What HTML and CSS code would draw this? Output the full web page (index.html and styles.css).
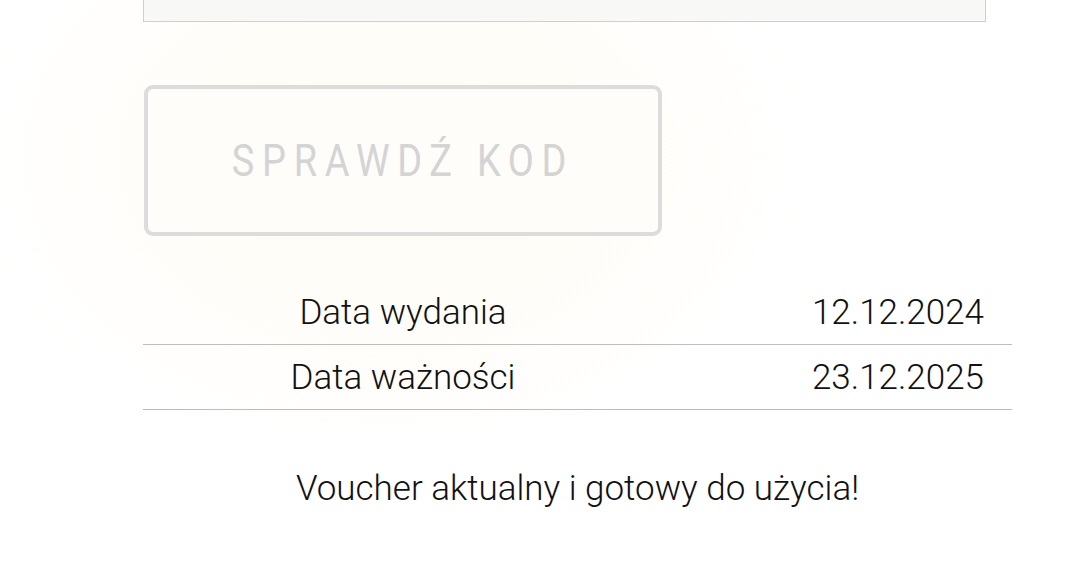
FILE: index.html
```html
<!DOCTYPE html>
<html lang="pl">
<head>
<meta charset="utf-8">
<link rel="stylesheet" href="styles.css">
</head>
<body>
<div class="page">
  <div class="top-box"></div>
  <button class="check-btn" type="button"><span class="btn-text">SPRAWDŹ KOD</span></button>
  <div class="info">
    <div class="row">
      <div class="label">Data wydania</div>
      <div class="value">12.12.2024</div>
    </div>
    <div class="row">
      <div class="label">Data ważności</div>
      <div class="value">23.12.2025</div>
    </div>
  </div>
  <p class="status">Voucher aktualny i gotowy do użycia!</p>
</div>
</body>
</html>
```
FILE: styles.css
```css
html, body {
  margin: 0;
  padding: 0;
}
body {
  width: 1080px;
  height: 569px;
  overflow: hidden;
  background: radial-gradient(ellipse 420px 300px at 390px 160px, #fffcf5 0%, #fffdf9 55%, #ffffff 100%);
  font-family: Roboto, "Liberation Sans", sans-serif;
  font-weight: 300;
  color: #111;
}
.page {
  padding: 0 68px 0 143px;
  display: flex;
  flex-direction: column;
}
.top-box {
  height: 21px;
  margin-right: 26px;
  background: #f8f8f7;
  border: 1px solid #cfcfcf;
  border-top: none;
}
.check-btn {
  margin: 63px 0 0 1px;
  width: 518px;
  height: 151px;
  border: 4px solid #dcdcdc;
  border-radius: 9px;
  background: #fefdfa;
  color: #d4d4d4;
  font-family: Roboto, "Liberation Sans", sans-serif;
  font-weight: 400;
  font-size: 44px;
  padding: 0;
  display: flex;
  align-items: center;
  justify-content: center;
}
.btn-text {
  display: inline-block;
  letter-spacing: 9px;
  transform: scaleX(0.86);
}
.info {
  margin-top: 44px;
}
.row {
  display: grid;
  grid-template-columns: 520px 1fr;
  height: 64px;
  align-items: center;
  border-bottom: 1px solid #bdbdbd;
  font-size: 35px;
}
.label {
  text-align: center;
}
.value {
  text-align: right;
  padding-right: 28px;
}
.status {
  margin: 58px 0 0;
  text-align: center;
  font-size: 35px;
  line-height: 41px;
}
```
